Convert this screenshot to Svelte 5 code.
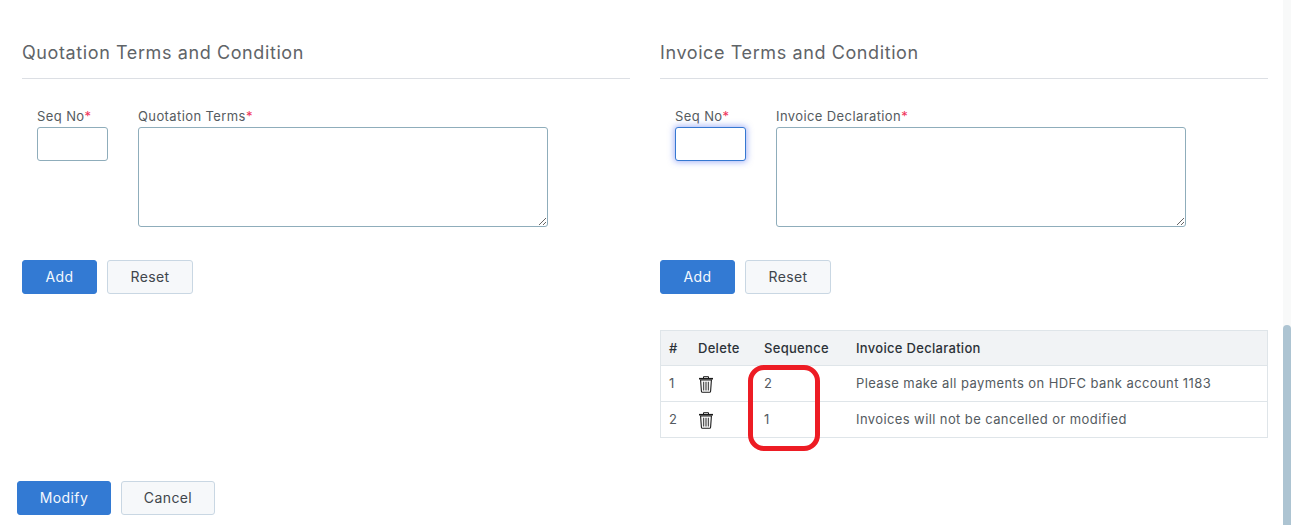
<script>
  const terms = [
    { seq: 2, text: 'Please make all payments on HDFC bank account 1183' },
    { seq: 1, text: 'Invoices will not be cancelled or modified' }
  ];
</script>

<div class="page">
  <div class="columns">
    <section class="col">
      <h2>Quotation Terms and Condition</h2>
      <div class="fields">
        <div class="field">
          <label for="q-seq">Seq No<span class="req">*</span></label>
          <input id="q-seq" type="text" />
        </div>
        <div class="field">
          <label for="q-terms">Quotation Terms<span class="req">*</span></label>
          <textarea id="q-terms"></textarea>
        </div>
      </div>
      <div class="actions">
        <button class="btn primary add">Add</button>
        <button class="btn light reset">Reset</button>
      </div>
    </section>

    <section class="col">
      <h2>Invoice Terms and Condition</h2>
      <div class="fields">
        <div class="field">
          <label for="i-seq">Seq No<span class="req">*</span></label>
          <input id="i-seq" class="focused" type="text" />
        </div>
        <div class="field">
          <label for="i-decl">Invoice Declaration<span class="req">*</span></label>
          <textarea id="i-decl"></textarea>
        </div>
      </div>
      <div class="actions">
        <button class="btn primary add">Add</button>
        <button class="btn light reset">Reset</button>
      </div>

      <div class="table-wrap">
        <table>
          <thead>
            <tr>
              <th class="c-num">#</th>
              <th class="c-del">Delete</th>
              <th class="c-seq">Sequence</th>
              <th>Invoice Declaration</th>
            </tr>
          </thead>
          <tbody>
            {#each terms as term, i}
              <tr>
                <td>{i + 1}</td>
                <td class="trash">
                  <svg width="16" height="17" viewBox="0 0 16 17" fill="none" stroke="#1a1a1a" aria-label="Delete">
                    <path d="M5.5 2V.7h5V2" stroke-width="1" />
                    <path d="M1 2.7h14" stroke-width="1.6" />
                    <path d="M2.6 4h10.8l-.8 11.2a1.2 1.2 0 0 1-1.2 1.1H4.6a1.2 1.2 0 0 1-1.2-1.1z" stroke-width="1.1" />
                    <path d="M5.6 5.8v8.6M8 5.8v8.6M10.4 5.8v8.6" stroke="#555" stroke-width="1.3" />
                  </svg>
                </td>
                <td>{term.seq}</td>
                <td>{term.text}</td>
              </tr>
            {/each}
          </tbody>
        </table>
        <div class="highlight"></div>
      </div>
    </section>
  </div>

  <div class="footer">
    <button class="btn primary modify">Modify</button>
    <button class="btn light cancel">Cancel</button>
  </div>

  <div class="scrollbar"><div class="thumb"></div></div>
</div>

<style>
  :global(body) {
    margin: 0;
    background: #fff;
    overflow: hidden;
  }

  .page {
    position: relative;
    height: 525px;
    overflow: hidden;
    font-family: Inter, "DejaVu Sans", sans-serif;
    font-size: 13px;
    letter-spacing: 0.4px;
    color: #4f5a62;
    box-sizing: border-box;
    padding-top: 41px;
  }

  .columns {
    display: flex;
    gap: 30px;
    padding-left: 22px;
  }

  .col {
    width: 608px;
  }

  h2 {
    margin: 0;
    height: 37px;
    font-size: 18px;
    line-height: 23px;
    font-weight: 400;
    letter-spacing: 0.6px;
    color: #5f6468;
    border-bottom: 1px solid #dcdfe4;
  }

  .fields {
    display: flex;
    gap: 30px;
    padding: 29px 0 0 15px;
  }

  .field {
    display: flex;
    flex-direction: column;
  }

  label {
    height: 19px;
    line-height: 16px;
    font-size: 13px;
    color: #555b60;
  }

  .req {
    color: #f0325a;
  }

  input,
  textarea {
    display: block;
    margin: 0;
    box-sizing: border-box;
    background: #fff;
    border: 1px solid #8fadbb;
    border-radius: 3px;
    outline: none;
  }

  input {
    width: 71px;
    height: 34px;
  }

  input.focused {
    border-color: #3578d1;
    box-shadow: 0 0 6px 1px rgba(70, 100, 240, 0.5);
  }

  textarea {
    width: 410px;
    height: 100px;
  }

  .actions {
    display: flex;
    gap: 10px;
    margin-top: 33px;
  }

  .btn {
    box-sizing: border-box;
    height: 34px;
    padding: 0 0 2px;
    border-radius: 3px;
    font-family: inherit;
    font-size: 14px;
    letter-spacing: 0.4px;
  }

  .primary {
    background: #337ad3;
    border: 1px solid #337ad3;
    color: #f4f8fd;
  }

  .light {
    background: #f6f8fa;
    border: 1px solid #c9d7e3;
    color: #40464c;
  }

  .add {
    width: 75px;
  }

  .reset {
    width: 86px;
  }

  .modify,
  .cancel {
    width: 94px;
  }

  .table-wrap {
    position: relative;
    margin-top: 36px;
  }

  table {
    width: 100%;
    border-collapse: collapse;
    border: 1px solid #dfe5e9;
    font-size: 13px;
  }

  th {
    height: 34px;
    padding: 0 0 0 8px;
    background: #f1f3f5;
    font-weight: 500;
    letter-spacing: 0.3px;
    color: #2c3238;
    text-align: left;
  }

  td {
    height: 33px;
    padding: 0 0 2px 8px;
    border-top: 1px solid #dfe5e9;
    color: #545b61;
  }

  .c-num {
    width: 21px;
  }

  .c-del {
    width: 58px;
  }

  .c-seq {
    width: 84px;
  }

  .trash svg {
    display: block;
    margin-top: 3px;
  }

  /* red annotation drawn over the sequence column */
  .highlight {
    position: absolute;
    left: 88px;
    top: 35px;
    width: 72px;
    height: 86px;
    box-sizing: border-box;
    border: 5px solid #ed1c24;
    border-radius: 16px;
  }

  .footer {
    display: flex;
    gap: 10px;
    margin: 43px 0 0 17px;
  }

  .scrollbar {
    position: absolute;
    top: 0;
    right: 0;
    bottom: 0;
    width: 8px;
    background: #f8f9f9;
  }

  .thumb {
    margin-top: 325px;
    height: 200px;
    background: #adc4d2;
    border-radius: 4px 4px 0 0;
  }
</style>
